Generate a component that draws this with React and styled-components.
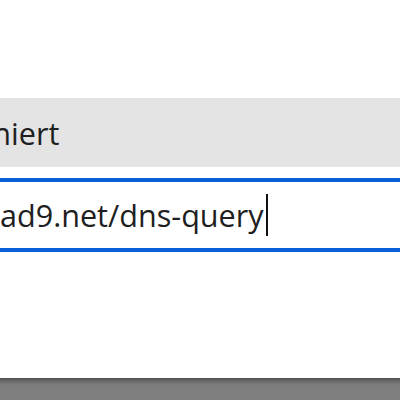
import React from "react";
import styled, { createGlobalStyle } from "styled-components";

const GlobalStyle = createGlobalStyle`
  html, body {
    margin: 0;
    padding: 0;
    background: #ffffff;
    overflow: hidden;
  }
  #root {
    height: 400px;
  }
`;

const Page = styled.div`
  display: flex;
  flex-direction: column;
  height: 400px;
  overflow: hidden;
  font-family: "Open Sans", "Noto Sans", sans-serif;
  color: #1f1f1f;
`;

// the dialog is wider than the window, it is scrolled sideways
const Sheet = styled.div`
  display: flex;
  flex-direction: column;
  gap: 11px;
  width: 820px;
  margin-left: ${(p) => p.$shift}px;
  padding-top: 98px;
`;

const ProviderRow = styled.div`
  display: flex;
  align-items: center;
  height: 69px;
  background: #e4e4e4;
  font-size: 30.6px;
  padding-left: ${(p) => p.$indent}px;
  white-space: nowrap;
`;

const UrlField = styled.div`
  display: flex;
  align-items: center;
  height: 66px;
  border: 4px solid #0a5fd8;
  font-size: 30.6px;
  padding-left: ${(p) => p.$indent}px;
  white-space: nowrap;
`;

const Caret = styled.span`
  display: inline-block;
  width: 2px;
  height: 42px;
  margin-left: 2px;
  background: #111111;
`;

const BottomBar = styled.div`
  margin-top: auto;
  height: 22px;
  background: linear-gradient(#4e4e4e 0px, #6a6a6a 3px, #7d7d7d 7px, #808080 100%);
`;

export default function App() {
  return (
    <>
      <GlobalStyle />
      <Page>
        <Sheet $shift={-210}>
          <ProviderRow $indent={19}>Benutzerdefiniert</ProviderRow>
          <UrlField $indent={4}>
            https://dns.quad9.net/dns-query
            <Caret />
          </UrlField>
        </Sheet>
        <BottomBar />
      </Page>
    </>
  );
}
